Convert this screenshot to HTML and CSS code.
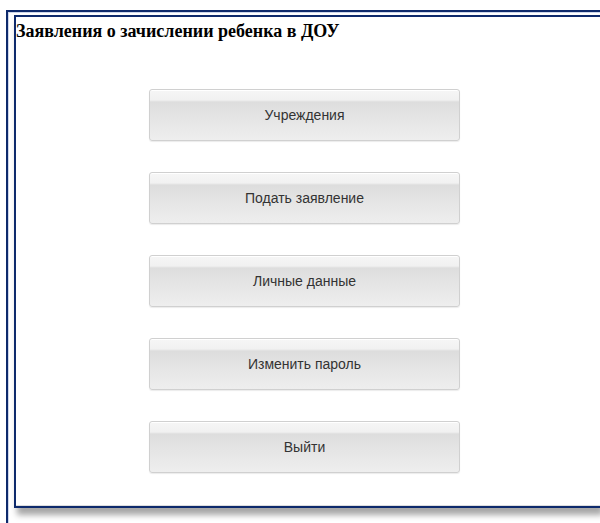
FILE: index.html
```html
<!DOCTYPE html>
<html lang="ru">
<head>
<meta charset="utf-8">
<title>Заявления о зачислении ребенка в ДОУ</title>
<link rel="stylesheet" href="styles.css">
</head>
<body>
<div class="outer">
  <div class="panel">
    <div class="content">
      <h1 class="title">Заявления о зачислении ребенка в ДОУ</h1>
      <nav class="menu">
        <button class="btn" type="button">Учреждения</button>
        <button class="btn" type="button">Подать заявление</button>
        <button class="btn" type="button">Личные данные</button>
        <button class="btn" type="button">Изменить пароль</button>
        <button class="btn" type="button">Выйти</button>
      </nav>
    </div>
  </div>
</div>
</body>
</html>
```

FILE: styles.css
```css
html, body {
  margin: 0;
  padding: 0;
  background: #ffffff;
}

body {
  width: 600px;
  height: 523px;
  overflow: hidden;
}

/* outer navy frame, open towards the right and bottom edges */
.outer {
  margin: 10px 0 0 6px;
  width: 594px;
  height: 513px;
  border: 2px solid #0e2a6c;
  border-right: none;
  border-bottom: none;
  box-shadow: inset 1px 1px 0 rgba(90, 120, 190, 0.3);
  padding: 3px 0 0 6px;
  box-sizing: border-box;
}

/* inner navy panel with drop shadow */
.panel {
  height: 493px;
  box-sizing: border-box;
  border: 2px solid #0e2a6c;
  border-right: none;
  padding-bottom: 4px;
  background: #ffffff;
  box-shadow: 3px 7px 6px rgba(0, 0, 0, 0.35);
}

.content {
  height: 485px;
  box-sizing: border-box;
  border-bottom: 1px solid #dedede;
}

.title {
  margin: 4px 0 0 0;
  font-family: "Liberation Serif", "Times New Roman", serif;
  font-weight: bold;
  font-size: 18px;
  line-height: 20px;
  color: #000000;
}

.menu {
  display: flex;
  flex-direction: column;
  align-items: flex-start;
  gap: 31px;
  margin-top: 48px;
  padding-left: 133px;
}

.btn {
  width: 311px;
  height: 52px;
  box-sizing: border-box;
  border: 1px solid #d0d0d0;
  border-radius: 3px;
  background: linear-gradient(to bottom,
    #f6f6f6 0px,
    #f1f1f1 10px,
    #dddddd 12px,
    #e4e4e4 26px,
    #eeeeee 50px);
  box-shadow: inset 0 1px 0 #ffffff, 0 1px 1px rgba(0, 0, 0, 0.08);
  font-family: "Liberation Sans", Arial, sans-serif;
  font-size: 14px;
  color: #333333;
  padding: 0;
  cursor: pointer;
}
```
